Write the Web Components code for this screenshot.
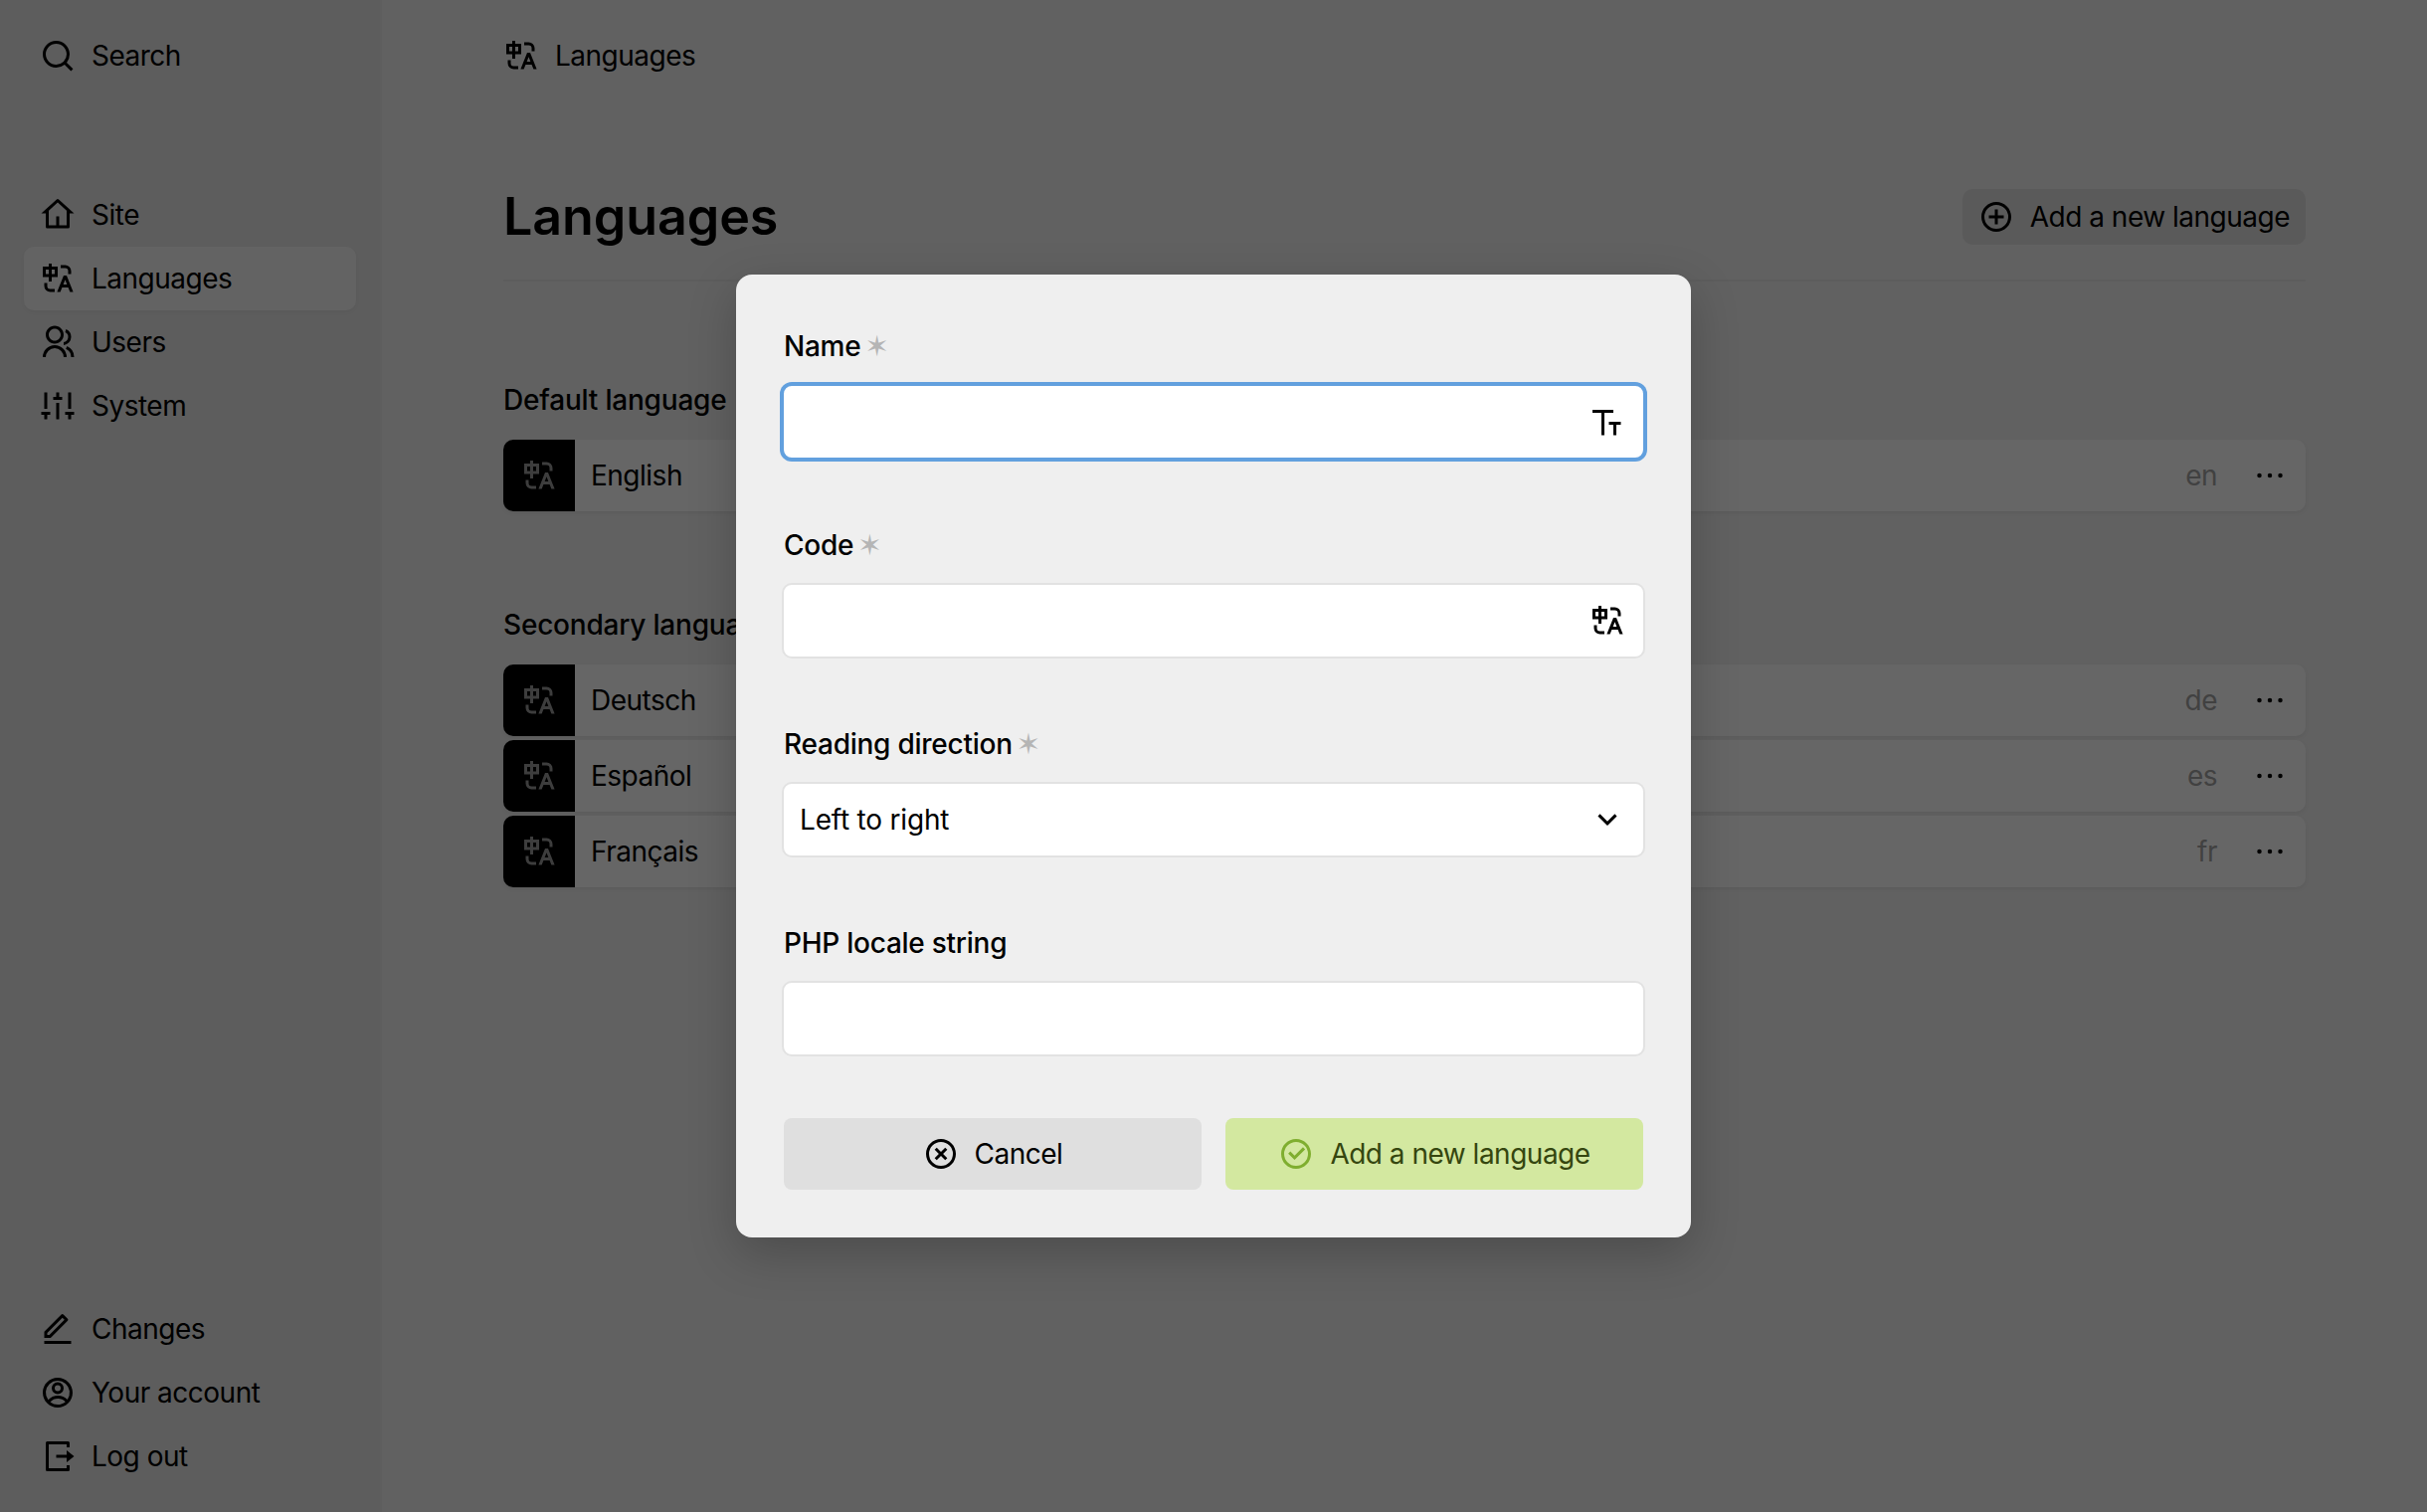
<!DOCTYPE html>
<html lang="en"><head><meta charset="utf-8"><title>Languages</title>
<style>
html,body{margin:0;height:100%}
body{font-family:Inter,"Liberation Sans",sans-serif;font-size:28px;letter-spacing:-.5px;color:#000;-webkit-font-smoothing:antialiased;overflow:hidden}
</style></head><body>
<panel-app>
  <panel-sidebar slot="side">
    <nav-item slot="top" icon="search">Search</nav-item>
    <nav-item slot="menu" icon="home">Site</nav-item>
    <nav-item slot="menu" icon="translate" active>Languages</nav-item>
    <nav-item slot="menu" icon="users">Users</nav-item>
    <nav-item slot="menu" icon="system">System</nav-item>
    <nav-item slot="bottom" icon="edit">Changes</nav-item>
    <nav-item slot="bottom" icon="account">Your account</nav-item>
    <nav-item slot="bottom" icon="logout">Log out</nav-item>
  </panel-sidebar>
  <panel-main slot="main">
    <nav-item slot="crumb" icon="translate">Languages</nav-item>
    <page-header slot="head" title="Languages"><head-button icon="add">Add a new language</head-button></page-header>
    <lang-section label="Default language">
      <lang-row code="en">English</lang-row>
    </lang-section>
    <lang-section label="Secondary languages">
      <lang-row code="de">Deutsch</lang-row>
      <lang-row code="es">Español</lang-row>
      <lang-row code="fr">Français</lang-row>
    </lang-section>
  </panel-main>
  <add-dialog slot="overlay">
    <form-field label="Name" required focused icon="title"></form-field>
    <form-field label="Code" required icon="translate"></form-field>
    <form-field label="Reading direction" required icon="chevron" value="Left to right"></form-field>
    <form-field label="PHP locale string"></form-field>
    <dialog-button slot="actions" icon="close">Cancel</dialog-button>
    <dialog-button slot="actions" icon="check" positive>Add a new language</dialog-button>
  </add-dialog>
</panel-app>
<script>
const ICONS={
search:'M18.031 16.617l4.283 4.282-1.415 1.415-4.282-4.283A8.96 8.96 0 0 1 11 20c-4.968 0-9-4.032-9-9s4.032-9 9-9 9 4.032 9 9a8.96 8.96 0 0 1-1.969 5.617zm-2.006-.742A6.977 6.977 0 0 0 18 11c0-3.868-3.133-7-7-7-3.868 0-7 3.132-7 7 0 3.867 3.132 7 7 7a6.977 6.977 0 0 0 4.875-1.975l.15-.15z',
home:'M19 21H5a1 1 0 0 1-1-1v-9H1l10.327-9.388a1 1 0 0 1 1.346 0L23 11h-3v9a1 1 0 0 1-1 1zm-6-2h5V9.157l-6-5.454-6 5.454V19h5v-6h2v6z',
translate:'M5 15v2a2 2 0 0 0 1.85 1.995L7 19h3v2H7a4 4 0 0 1-4-4v-2h2zm13-5l4.4 11h-2.155l-1.201-3h-4.09l-1.199 3h-2.154L16 10h2zm-1 2.885L15.753 16h2.492L17 12.885zM8 2v2h4v7H8v3H6v-3H2V4h4V2h2zm9 1a4 4 0 0 1 4 4v2h-2V7a2 2 0 0 0-2-2h-3V3h3zM6 6H4v3h2V6zm4 0H8v3h2V6z',
users:'M2 22a8 8 0 1 1 16 0h-2a6 6 0 1 0-12 0H2zm8-9c-3.315 0-6-2.685-6-6s2.685-6 6-6 6 2.685 6 6-2.685 6-6 6zm0-2c2.21 0 4-1.79 4-4s-1.79-4-4-4-4 1.79-4 4 1.79 4 4 4zm8.284 3.703A8.002 8.002 0 0 1 23 22h-2a6.001 6.001 0 0 0-3.537-5.473l.82-1.824zm-.688-11.29A5.5 5.5 0 0 1 21 8.5a5.499 5.499 0 0 1-5 5.478v-2.013a3.5 3.5 0 0 0 1.041-6.609l.555-1.943z',
system:'M21 18v3h-2v-3h-2v-2h6v2h-2zM5 18v3H3v-3H1v-2h6v2H5zm6-12V3h2v3h2v2H9V6h2zm0 4h2v11h-2V10zm-8 4V3h2v11H3zm16 0V3h2v11h-2z',
edit:'M6.414 16L16.556 5.858l-1.414-1.414L5 14.586V16h1.414zm.829 2H3v-4.243L14.435 2.322a1 1 0 0 1 1.414 0l2.829 2.829a1 1 0 0 1 0 1.414L7.243 18zM3 20h18v2H3v-2z',
account:'M12 22C6.477 22 2 17.523 2 12S6.477 2 12 2s10 4.477 10 10-4.477 10-10 10zm-4.987-3.744A7.966 7.966 0 0 0 12 20c1.97 0 3.773-.712 5.167-1.892A6.979 6.979 0 0 0 12.16 16a6.981 6.981 0 0 0-5.147 2.256zM5.616 16.82A8.975 8.975 0 0 1 12.16 14a8.972 8.972 0 0 1 6.362 2.634 8 8 0 1 0-12.906.187zM12 13a4 4 0 1 1 0-8 4 4 0 0 1 0 8zm0-2a2 2 0 1 0 0-4 2 2 0 0 0 0 4z',
logout:'M5 22a1 1 0 0 1-1-1V3a1 1 0 0 1 1-1h14a1 1 0 0 1 1 1v3h-2V4H6v16h12v-2h2v3a1 1 0 0 1-1 1H5zm13-6v-3h-7v-2h7V8l5 4-5 4z',
add:'M11 11V7h2v4h4v2h-4v4h-2v-4H7v-2h4zm1 11C6.477 22 2 17.523 2 12S6.477 2 12 2s10 4.477 10 10-4.477 10-10 10zm0-2a8 8 0 1 0 0-16 8 8 0 0 0 0 16z',
close:'M12 22C6.477 22 2 17.523 2 12S6.477 2 12 2s10 4.477 10 10-4.477 10-10 10zm0-2a8 8 0 1 0 0-16 8 8 0 0 0 0 16zm0-9.414l2.828-2.829 1.415 1.415L13.414 12l2.829 2.828-1.415 1.415L12 13.414l-2.828 2.829-1.415-1.415L10.586 12 7.757 9.172l1.415-1.415L12 10.586z',
check:'M12 22C6.477 22 2 17.523 2 12S6.477 2 12 2s10 4.477 10 10-4.477 10-10 10zm0-2a8 8 0 1 0 0-16 8 8 0 0 0 0 16zm-.997-4L6.76 11.757l1.414-1.414 2.829 2.829 5.656-5.657 1.415 1.414L11.003 16z',
title:'M10 6v15H8V6H2V4h14v2h-6zm8 8v7h-2v-7h-3v-2h8v2h-3z',
chevron:'M12 13.172l4.95-4.95 1.414 1.414L12 16 5.636 9.636 7.05 8.222z',
more:'M5 10.5a1.5 1.5 0 1 0 0 3 1.5 1.5 0 0 0 0-3zm14 0a1.5 1.5 0 1 0 0 3 1.5 1.5 0 0 0 0-3zm-7 0a1.5 1.5 0 1 0 0 3 1.5 1.5 0 0 0 0-3z'
};
function def(tag,render){
  customElements.define(tag,class extends HTMLElement{
    connectedCallback(){
      if(this.shadowRoot)return;
      this.attachShadow({mode:'open'}).innerHTML=render(this);
    }
  });
}
def('ui-icon',el=>`<style>:host{display:block;width:36px;height:36px;flex:none;color:inherit}svg{display:block;width:100%;height:100%;fill:currentColor}</style><svg viewBox="0 0 24 24" aria-hidden="true"><path d="${ICONS[el.getAttribute('name')]}"/></svg>`);
def('panel-app',()=>`<style>
:host{display:grid;grid-template-columns:384px 1fr;width:100%;height:100vh;position:relative;background:#f2f2f2;overflow:hidden}
.veil{position:absolute;inset:0;background:rgba(0,0,0,.6);display:grid;place-items:center}
</style><slot name="side"></slot><slot name="main"></slot><div class="veil"><slot name="overlay"></slot></div>`);
def('panel-sidebar',()=>`<style>
:host{display:flex;flex-direction:column;box-sizing:border-box;height:100vh;padding:24px;background:#e8e8e8;border-right:2px solid #ececec}
.menu{display:flex;flex-direction:column;margin-top:96px}
.bottom{display:flex;flex-direction:column;margin-top:auto}
</style><slot name="top"></slot><div class="menu"><slot name="menu"></slot></div><div class="bottom"><slot name="bottom"></slot></div>`);
def('nav-item',el=>`<style>
:host{display:flex;align-items:center;gap:16px;height:64px;padding:0 16px;border-radius:10px;box-sizing:border-box;${el.hasAttribute('active')?'background:#f8f8f8;box-shadow:0 2px 4px rgba(0,0,0,.04);':''}}
</style><ui-icon name="${el.getAttribute('icon')}"></ui-icon><span><slot></slot></span>`);
def('panel-main',()=>`<style>
:host{display:flex;flex-direction:column;box-sizing:border-box;padding:24px 122px 0;min-width:0}
.crumb{margin-left:-16px;display:block}
</style><div class="crumb"><slot name="crumb"></slot></div><slot name="head"></slot><slot></slot>`);
def('page-header',el=>`<style>
:host{display:flex;align-items:center;justify-content:space-between;margin-top:102px;padding-bottom:35px;border-bottom:2px solid #e8e8e8;margin-bottom:99px}
h1{margin:0;font-size:52px;font-weight:600;line-height:56px;letter-spacing:-.1px}
</style><h1>${el.getAttribute('title')}</h1><slot></slot>`);
def('head-button',el=>`<style>
:host{display:flex;align-items:center;gap:16px;height:56px;padding:0 16px;border-radius:10px;background:#e2e2e2}
</style><ui-icon name="${el.getAttribute('icon')}"></ui-icon><span><slot></slot></span>`);
def('lang-section',el=>`<style>
:host{display:block;margin-bottom:94px}
h2{margin:0 0 20px;font-size:28px;line-height:40px;font-weight:500;letter-spacing:-.2px}
.rows{display:flex;flex-direction:column;gap:4px}
</style><h2>${el.getAttribute('label')}</h2><div class="rows"><slot></slot></div>`);
def('lang-row',el=>`<style>
:host{display:flex;align-items:center;height:72px;background:#fff;border-radius:10px;box-shadow:0 2px 4px rgba(0,0,0,.06);overflow:hidden}
.pic{width:72px;height:72px;background:#000;color:#9a9a9a;display:grid;place-items:center;flex:none}
.name{flex:1;padding-left:16px}
.code{color:#a4a4a4;padding-right:17px}
.more{width:72px;height:72px;display:grid;place-items:center;flex:none}
</style><div class="pic"><ui-icon name="translate"></ui-icon></div><span class="name"><slot></slot></span><span class="code">${el.getAttribute('code')}</span><div class="more"><ui-icon name="more"></ui-icon></div>`);
def('add-dialog',()=>`<style>
:host{display:flex;flex-direction:column;box-sizing:border-box;width:960px;height:968px;padding:52px 46px 48px;background:#efefef;border-radius:16px;box-shadow:0 16px 48px rgba(0,0,0,.22)}
.fields{display:flex;flex-direction:column;gap:66px}
.actions{display:grid;grid-template-columns:1fr 1fr;gap:24px;margin:62px 2px 0}
</style><div class="fields"><slot></slot></div><div class="actions"><slot name="actions"></slot></div>`);
def('form-field',el=>{
 const f=el.hasAttribute('focused'),ic=el.getAttribute('icon'),v=el.getAttribute('value')||'';
 return `<style>
:host{display:block}
label{display:flex;align-items:center;gap:4px;height:40px;margin:0 0 18px 2px;font-weight:500;line-height:40px;letter-spacing:-.25px}
.star{font:29px/1 "DejaVu Sans",sans-serif;height:29px;color:#b5b5b5}
.box{display:flex;align-items:center;justify-content:space-between;box-sizing:border-box;height:76px;padding:0 18px 0 16px;background:#fff;border:2px solid #e2e2e2;border-radius:10px;${f?'border-color:#62a0de;box-shadow:0 0 0 2px #62a0de;':''}}
.val{font-weight:400;letter-spacing:-.2px}
</style><label><span>${el.getAttribute('label')}</span>${el.hasAttribute('required')?'<span class="star">✶</span>':''}</label><div class="box"><span class="val">${v}</span>${ic?`<ui-icon name="${ic}"></ui-icon>`:''}</div>`;
});
def('dialog-button',el=>{
 const p=el.hasAttribute('positive');
 return `<style>
:host{display:flex;align-items:center;justify-content:center;gap:16px;height:72px;border-radius:8px;background:${p?'#d3e8a0':'#dfdfdf'};color:${p?'#35460f':'#000'}}
ui-icon{color:${p?'#7fae2f':'#000'}}
</style><ui-icon name="${el.getAttribute('icon')}"></ui-icon><span><slot></slot></span>`;
});
</script>
</body></html>
